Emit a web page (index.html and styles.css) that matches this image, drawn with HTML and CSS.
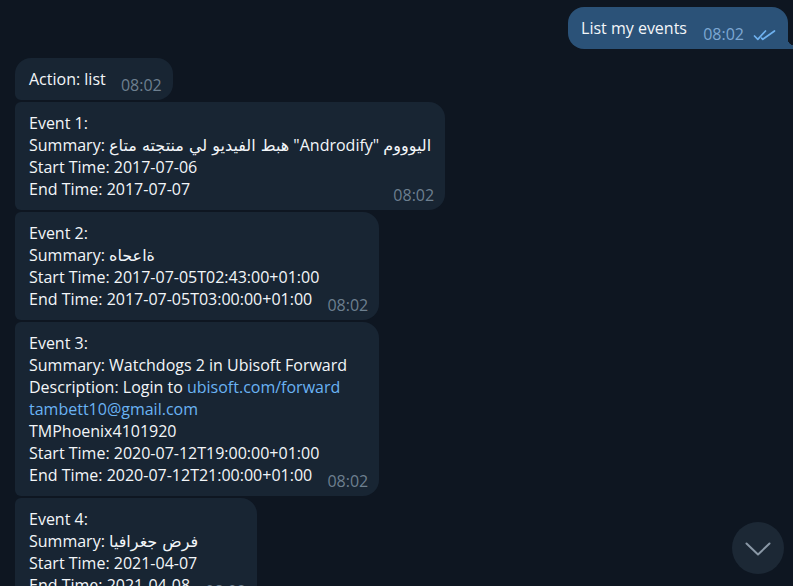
FILE: index.html
```html
<!DOCTYPE html>
<html lang="en">
<head>
<meta charset="utf-8">
<title>Chat</title>
<link rel="stylesheet" href="styles.css">
</head>
<body>
<div class="chat">
  <div class="bubble out">List my events<span class="spacer spacer-out"></span><span class="meta"><span class="time">08:02</span><svg class="checks" width="24" height="14" viewBox="0 0 24 14"><path d="M1.5 8 L4.8 11.3 L12.5 3" /><path d="M8.6 10.1 L9.8 11.3 L21.5 3" /></svg></span></div>

  <div class="bubble in first">Action: list<span class="spacer"></span><span class="meta"><span class="time">08:02</span></span></div>

  <div class="bubble in">Event 1:<br>Summary: <span class="ar">هبط الفيديو لي منتجته متاع</span> "Androdify" <span class="ar">اليوووم</span><br>Start Time: 2017-07-06<br>End Time: 2017-07-07<span class="spacer"></span><span class="meta"><span class="time">08:02</span></span></div>

  <div class="bubble in">Event 2:<br>Summary: <span class="ar">ةاعحاه</span><br>Start Time: 2017-07-05T02:43:00+01:00<br>End Time: 2017-07-05T03:00:00+01:00<span class="spacer"></span><span class="meta"><span class="time">08:02</span></span></div>

  <div class="bubble in">Event 3:<br>Summary: Watchdogs 2 in Ubisoft Forward<br>Description: Login to <a class="link" href="#">ubisoft.com/forward</a><br><a class="link" href="#">tambett10@gmail.com</a><br>TMPhoenix4101920<br>Start Time: 2020-07-12T19:00:00+01:00<br>End Time: 2020-07-12T21:00:00+01:00<span class="spacer"></span><span class="meta"><span class="time">08:02</span></span></div>

  <div class="bubble in">Event 4:<br>Summary: <span class="ar">فرض جغرافيا</span><br>Start Time: 2021-04-07<br>End Time: 2021-04-08<span class="spacer"></span><span class="meta"><span class="time">08:02</span></span></div>
</div>
<button class="scroll-down" aria-label="Scroll down"><svg width="26" height="16" viewBox="0 0 26 16"><path d="M1.5 2.5 L13 13.5 L24.5 2.5" /></svg></button>
</body>
</html>
```

FILE: styles.css
```css
html, body {
  margin: 0;
  padding: 0;
  height: 100%;
}

body {
  background: #0e1621;
  font-family: "Open Sans", "DejaVu Sans", sans-serif;
  font-size: 16px;
  line-height: 22px;
  color: #f3f6f9;
  overflow: hidden;
  position: relative;
}

.chat {
  display: flex;
  flex-direction: column;
  align-items: flex-start;
  gap: 2px;
  padding: 7px 5px 0 15px;
}

.bubble {
  position: relative;
  padding: 10px 14px 10px 14px;
  white-space: nowrap;
}

.bubble.in {
  background: #182533;
  border-radius: 6px 16px 16px 6px;
}

.bubble.in.first {
  border-top-left-radius: 16px;
}

.bubble.out {
  align-self: flex-end;
  background: #2b5278;
  border-radius: 16px 16px 0 16px;
  margin-bottom: 7px;
  padding-left: 13px;
}

.bubble.out::after {
  content: "";
  position: absolute;
  right: -6px;
  bottom: 0;
  width: 6px;
  height: 10px;
  background: radial-gradient(circle at 100% 0, transparent 6px, #2b5278 6.5px);
}

.spacer {
  display: inline-block;
  width: 53px;
}

.spacer-out {
  width: 87px;
}

.meta {
  position: absolute;
  right: 11px;
  bottom: 4px;
  display: flex;
  align-items: center;
  gap: 9px;
  line-height: 22px;
}

.time {
  color: #6d7f8f;
}

.out .time {
  color: #7da8d3;
}

.checks {
  display: block;
  margin-top: 1px;
}

.checks path {
  fill: none;
  stroke: #6fb1ee;
  stroke-width: 1.7;
  stroke-linecap: round;
  stroke-linejoin: round;
}

.ar {
  line-height: 14px;
  font-family: "DejaVu Sans", sans-serif;
  font-size: 16px;
}

.link {
  color: #6ab3f3;
  text-decoration: none;
}

.scroll-down {
  position: absolute;
  left: 732px;
  top: 522px;
  width: 52px;
  height: 52px;
  border: 0;
  padding: 0;
  border-radius: 50%;
  background: #1c2835;
  display: flex;
  align-items: center;
  justify-content: center;
}

.scroll-down svg {
  display: block;
  margin-top: 2px;
}

.scroll-down path {
  fill: none;
  stroke: #8a98a6;
  stroke-width: 2;
  stroke-linecap: round;
  stroke-linejoin: round;
}
```
